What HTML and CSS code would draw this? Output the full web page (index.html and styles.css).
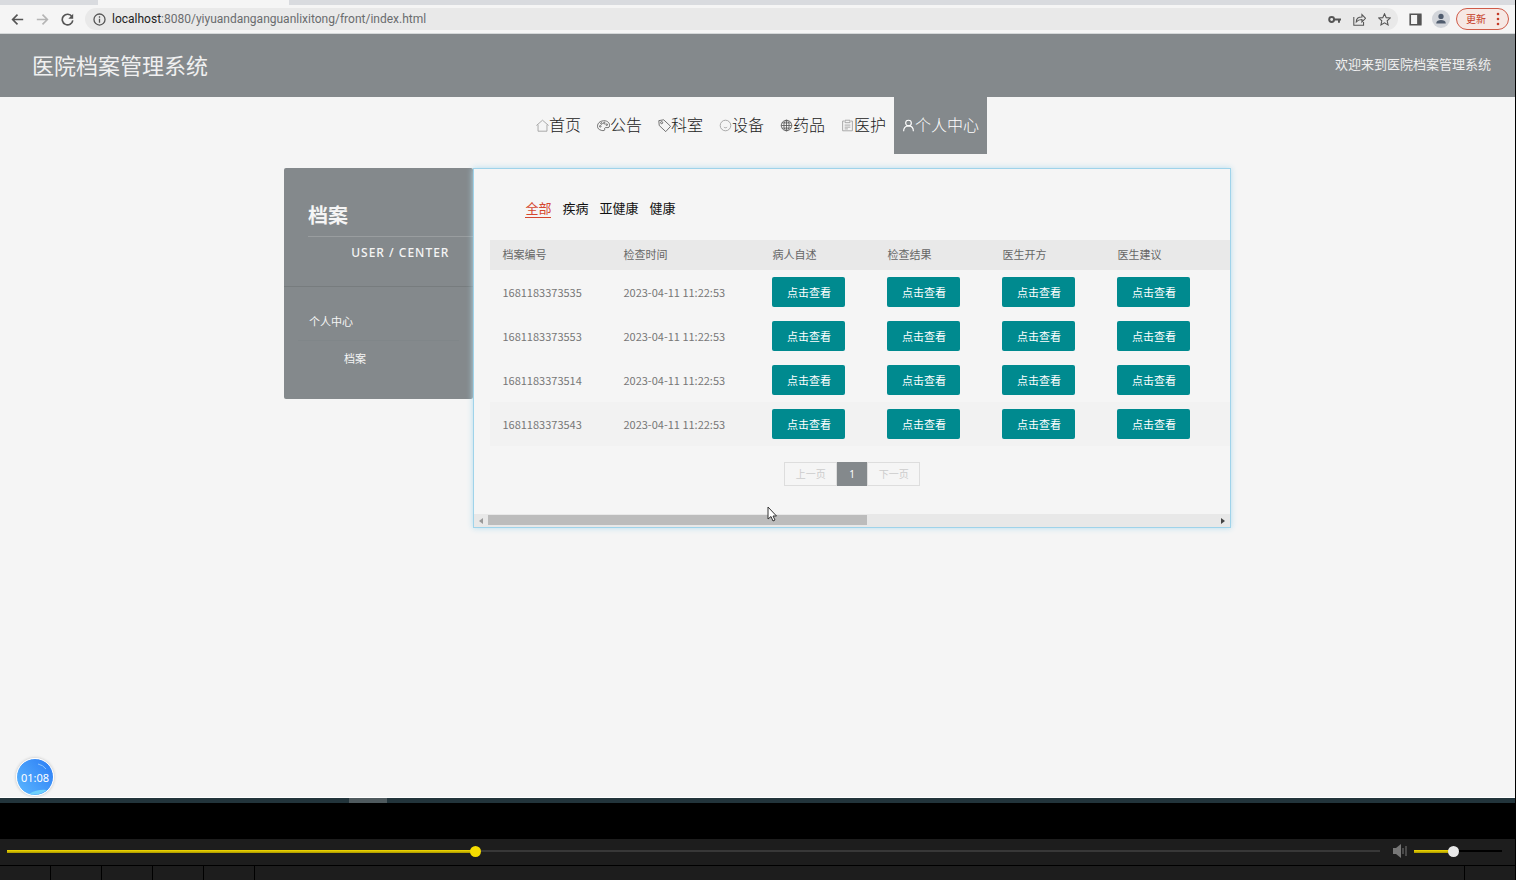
FILE: index.html
```html
<!DOCTYPE html>
<html lang="zh-CN">
<head>
    <meta charset="utf-8">
    <meta name="viewport" content="width=device-width, initial-scale=1">
    <title>医院档案管理系统</title>
    <link rel="stylesheet" href="styles.css">
</head>
<body>
    <!-- 浏览器 -->
    <div class="tab-strip"><div class="tab-active"></div></div>
    <div class="toolbar">
        <button class="tool" aria-label="后退"><svg viewBox="0 0 16 16"><path d="M15 8H2M8 2L2 8l6 6"/></svg></button>
        <button class="tool tool-off" aria-label="前进"><svg viewBox="0 0 16 16"><path d="M1 8h13M8 2l6 6-6 6"/></svg></button>
        <button class="tool" aria-label="刷新"><svg viewBox="0 0 16 16"><path d="M13.5 4.5A6.5 6.5 0 1 0 14.5 9"/><path d="M15 1v6H9z" class="solid"/></svg></button>
        <div class="address">
            <svg class="info" viewBox="0 0 16 16"><circle cx="8" cy="8" r="6.8"/><path d="M8 7v5M8 4v1.8"/></svg>
            <div class="url"><b>localhost</b>:8080/yiyuandanganguanlixitong/front/index.html</div>
            <button class="tool" aria-label="密码"><svg viewBox="0 0 16 16"><circle cx="4.5" cy="8" r="3" class="thick"/><path d="M8 8h8M13.5 8v4" class="thick"/></svg></button>
            <button class="tool" aria-label="分享"><svg viewBox="0 0 16 16" class="thin"><path d="M1 5v10h12v-4M4 11c0-4 3-6 7-6V2l4.500 4.500L11 11V8c-3 0-5 .5-7 3z"/></svg></button>
            <button class="tool" aria-label="收藏"><svg viewBox="0 0 16 16" class="thin"><path d="M8 1l2.100 4.700 5 .5-3.800 3.400 1.100 5L8 12l-4.400 2.600 1.100-5L.9 6.200l5-.5z"/></svg></button>
        </div>
        <button class="tool" aria-label="侧边栏"><svg viewBox="0 0 16 16"><path d="M1.500 1.500h13v13h-13z"/><path d="M10 2h5v12h-5z" class="solid"/></svg></button>
        <button class="avatar" aria-label="用户"><svg viewBox="0 0 16 16"><circle cx="8" cy="5" r="3"/><path d="M2.500 13c0-5 11-5 11 0z"/></svg></button>
        <button class="update">更新<svg viewBox="0 0 4 14"><circle cx="2" cy="2" r="1.300"/><circle cx="2" cy="7" r="1.300"/><circle cx="2" cy="12" r="1.300"/></svg></button>
    </div>

    <header class="header">
        <h1>医院档案管理系统</h1>
        <div>欢迎来到医院档案管理系统</div>
    </header>

    <nav class="nav">
        <a href="#"><svg viewBox="0 0 16 16" class="light"><path d="M.5 8L8 1.500 15.500 8M2.500 7v8h11V7"/></svg>首页</a>
        <a href="#"><svg viewBox="0 0 16 16"><path d="M3 13C-1 11 0 4 6 2.500s10 2 9.500 6c-.5 3-3 2-4.500 2s-2 1-1.500 2.500-3 2-6.500 0z"/><circle cx="4" cy="9" r="1"/><circle cx="5.500" cy="5.500" r="1"/><circle cx="9" cy="5" r="1"/><circle cx="12" cy="7" r="1"/></svg>公告</a>
        <a href="#"><svg viewBox="0 0 16 16"><path d="M1 2l6-1 8.500 8-6 6.500L1.500 8z"/><circle cx="4.500" cy="4.500" r="1.300"/></svg>科室</a>
        <a href="#"><svg viewBox="0 0 16 16" class="light"><circle cx="8" cy="8" r="6.500"/><path d="M6 10c1 1 3 1 4 0"/></svg>设备</a>
        <a href="#"><svg viewBox="0 0 16 16"><circle cx="8" cy="8" r="6.500"/><ellipse cx="8" cy="8" rx="3.200" ry="6.500"/><path d="M8 1.500v13M1.500 8h13M2.500 4.800h11M2.500 11.200h11"/></svg>药品</a>
        <a href="#"><svg viewBox="0 0 16 16" class="light"><path d="M4 2.500H2v12h12v-12h-2M5 1.500h6v3H5zM4.500 7.500h7M4.500 10h7M4.500 12.200h4"/></svg>医护</a>
        <a href="#" class="active"><svg viewBox="0 0 16 16"><circle cx="8" cy="5" r="3.500"/><path d="M2 15c0-4 2-6.500 6-6.500s6 2.500 6 6.500"/></svg>个人中心</a>
    </nav>

    <main class="container">
        <aside class="sidebar">
            <div class="sidebar-title">
                <h2>档案</h2>
                <p>USER / CENTER</p>
            </div>
            <div class="sidebar-menu">
                <a href="#">个人中心</a>
                <a href="#" class="sub">档案</a>
            </div>
        </aside>

        <section class="panel">
            <div class="filters">
                <a href="#" class="active">全部</a>
                <a href="#">疾病</a>
                <a href="#">亚健康</a>
                <a href="#">健康</a>
            </div>
            <table class="records">
                <colgroup>
                    <col class="col-no"><col class="col-time"><col class="col-btn"><col class="col-btn"><col class="col-btn"><col>
                </colgroup>
                <thead>
                    <tr><th>档案编号</th><th>检查时间</th><th>病人自述</th><th>检查结果</th><th>医生开方</th><th>医生建议</th></tr>
                </thead>
                <tbody>
                    <tr>
                        <td>1681183373535</td><td>2023-04-11 11:22:53</td>
                        <td><button>点击查看</button></td><td><button>点击查看</button></td><td><button>点击查看</button></td><td><button>点击查看</button></td>
                    </tr>
                    <tr>
                        <td>1681183373553</td><td>2023-04-11 11:22:53</td>
                        <td><button>点击查看</button></td><td><button>点击查看</button></td><td><button>点击查看</button></td><td><button>点击查看</button></td>
                    </tr>
                    <tr>
                        <td>1681183373514</td><td>2023-04-11 11:22:53</td>
                        <td><button>点击查看</button></td><td><button>点击查看</button></td><td><button>点击查看</button></td><td><button>点击查看</button></td>
                    </tr>
                    <tr class="hover">
                        <td>1681183373543</td><td>2023-04-11 11:22:53</td>
                        <td><button>点击查看</button></td><td><button>点击查看</button></td><td><button>点击查看</button></td><td><button>点击查看</button></td>
                    </tr>
                </tbody>
            </table>
            <div class="pager">
                <button disabled>上一页</button>
                <button class="current">1</button>
                <button disabled>下一页</button>
            </div>
            <div class="scrollbar">
                <button class="arrow arrow-off" aria-label="向左滚动"><svg viewBox="0 0 4 6"><path d="M4 0v6L0 3z"/></svg></button>
                <div class="track"><div class="thumb"></div></div>
                <button class="arrow" aria-label="向右滚动"><svg viewBox="0 0 4 6"><path d="M0 0v6l4-3z"/></svg></button>
            </div>
            <svg class="cursor" viewBox="0 0 10 16"><path d="M1 1v12l3-2.500 2 4.500 2-1-2-4h3.500z"/></svg>
        </section>
    </main>

    <div class="timer">
        <svg viewBox="0 0 36 36"><path d="M12 35q8-5 18-4-8 6-18 4z" fill="#6fd0fb"/><path d="M21 5q5 1 8 5" fill="none" stroke="#8fc6ff"/></svg>
        <span>01:08</span>
    </div>

    <!-- 播放器 -->
    <div class="taskbar"><div class="taskbar-item"></div></div>
    <footer class="player">
        <div class="controls">
            <input type="range" class="progress" aria-label="进度" min="0" max="100" step="0.1" value="34" style="--value: 34%">
            <svg class="speaker" viewBox="0 0 16 14"><path d="M1 4h3l5-4v14l-5-4H1z"/><path d="M10.500 4h1v6h-1zM13.500 2h1v10h-1z"/></svg>
            <input type="range" class="volume" aria-label="音量" value="44" style="--value: 44%">
        </div>
        <div class="buttons">
            <div class="cell"></div><div class="cell"></div><div class="cell"></div><div class="cell"></div><div class="cell"></div>
            <div class="cell cell-last"></div>
        </div>
    </footer>
</body>
</html>
```
FILE: styles.css
```css
* {
    box-sizing: border-box;
}
html, body {
    height: 100%;
    margin: 0;
}
body {
    display: flex;
    flex-direction: column;
    position: relative;
    overflow: hidden;
    border-right: 1px solid #000;
    background: #f5f5f5;
    font-family: "Noto Sans", "Noto Sans CJK SC", sans-serif;
    font-size: 11px;
    color: #666;
}
a {
    color: inherit;
    text-decoration: none;
}
button {
    padding: 0;
    border: 0;
    background: none;
    font: inherit;
    color: inherit;
}
h1, h2, p {
    margin: 0;
}

/* 浏览器 */
.tab-strip {
    flex: none;
    height: 5px;
    padding-left: 98px;
    background: #d9dbdf;
}
.tab-active {
    width: 191px;
    height: 5px;
    background: #f5f5f5;
}
.toolbar {
    flex: none;
    display: flex;
    align-items: center;
    gap: 12px;
    height: 29px;
    padding: 0 6px 0 11px;
    border-bottom: 1px solid #d5d8d9;
}
.toolbar svg {
    display: block;
    fill: none;
    stroke: #555;
    stroke-width: 2;
}
.tool, .tool svg {
    width: 13px;
    height: 13px;
}
.toolbar .tool-off svg { stroke: #b5b5b5; }
.toolbar .thin { stroke-width: 1.3; }
.toolbar .thick { stroke-width: 2.4; }
.toolbar .solid { fill: #555; stroke: none; }
.address {
    flex: 1;
    display: flex;
    align-items: center;
    gap: 12px;
    height: 22px;
    padding: 0 7px 0 8px;
    margin: 0 -1px;
    border-radius: 11px;
    background: #e9e9e9;
}
.toolbar .info {
    width: 13px;
    height: 13px;
    margin-right: -6px;
    stroke-width: 1.6;
}
.url {
    flex: 1;
    font-family: Roboto, sans-serif;
    font-size: 12px;
    line-height: 16px;
    color: #6a6c6e;
}
.url b {
    font-weight: normal;
    color: #222;
}
.avatar {
    display: grid;
    place-items: center;
    width: 18px;
    height: 18px;
    margin: 0 -6px 0 -2px;
    border-radius: 50%;
    background: #d2d5da;
}
.avatar svg {
    width: 14px;
    height: 14px;
    fill: #505c6e;
    stroke: none;
}
.update {
    display: flex;
    align-items: center;
    justify-content: space-between;
    width: 53px;
    height: 22px;
    padding: 0 8px 0 9px;
    border: 1px solid #cf5b48;
    border-radius: 11px;
    background: #f6e8e4;
    font-size: 10px;
    line-height: 18px;
    color: #c53b27;
}
.update svg {
    width: 4px;
    height: 14px;
    fill: #c53b27;
    stroke: none;
}

/* 头部 */
.header {
    flex: none;
    display: flex;
    align-items: center;
    justify-content: space-between;
    height: 63px;
    padding: 0 24px 4px 32px;
    background: #84898c;
    font-size: 13px;
    color: #f0f0f0;
}
.header h1 {
    font-size: 22px;
    font-weight: normal;
}
.nav {
    flex: none;
    display: flex;
    justify-content: center;
    height: 57px;
    margin-bottom: 14px;
    font-size: 16px;
    font-weight: 300;
    color: #222;
}
.nav a {
    display: flex;
    align-items: center;
    padding: 0 8px 4px;
}
.nav svg {
    width: 13px;
    height: 13px;
    margin-top: 3px;
    fill: none;
    stroke: #555;
}
.nav .light { stroke: #999; }
.nav .active {
    background: #84898c;
    color: #fff;
}
.nav .active svg {
    stroke: #fff;
    stroke-width: 1.4;
}

/* 内容 */
.container {
    display: flex;
    align-items: flex-start;
    width: 62.5%;
    margin: 0 auto;
}
.sidebar {
    width: 20%;
    border-radius: 2px;
    overflow: hidden;
    background: #84898c;
    color: #f5f5f5;
}
.sidebar-title {
    height: 119px;
    padding: 32px 0 0 24px;
    border-bottom: 1px solid #777c7e;
}
.sidebar-title h2 {
    padding-bottom: 4px;
    border-bottom: 1px solid #999d9f;
    font-size: 20px;
    line-height: 32px;
}
.sidebar-title p {
    padding-right: 24px;
    font-size: 12px;
    font-weight: 500;
    line-height: 31px;
    letter-spacing: 1px;
    text-align: right;
}
.sidebar-menu {
    height: 112px;
    padding: 17px 14px;
}
.sidebar-menu a {
    display: block;
    padding-left: 11px;
    line-height: 36px;
    border-bottom: 1px solid #808689;
}
.sidebar-menu .sub {
    padding-left: 46px;
    border: 0;
}
.panel {
    position: relative;
    flex: 1;
    min-width: 0;
    border: 1px solid #9fd3ea;
    box-shadow: 0 0 6px #b3dcee;
}
.filters {
    display: flex;
    gap: 11px;
    padding: 30px 51px 22px;
    font-size: 13px;
    line-height: 18px;
    color: #111;
}
.filters a { border-bottom: 1px solid transparent; }
.filters .active {
    border-color: #d5472f;
    color: #d5472f;
}
.records {
    width: calc(100% - 16px);
    margin-left: 16px;
    table-layout: fixed;
    border-collapse: collapse;
    font-family: "Noto Sans CJK SC", sans-serif;
}
.col-no { width: 121px; }
.col-time { width: 149px; }
.col-btn { width: 115px; }
.records th, .records td {
    padding: 0 12px;
    text-align: left;
    font-weight: normal;
    white-space: nowrap;
}
.records th {
    height: 30px;
    padding-bottom: 2px;
    background: #e9e9e9;
}
.records td {
    height: 44px;
    color: #777;
}
.records .hover { background: #f2f2f2; }
.records button {
    display: block;
    width: 73px;
    height: 30px;
    border-radius: 2px;
    background: #008a8f;
    line-height: 28px;
    color: #fff;
}
.pager {
    display: flex;
    justify-content: center;
    padding: 16px 0 28px;
    font-size: 10px;
}
.pager button {
    width: 53px;
    height: 24px;
    padding-bottom: 2px;
    border: 1px solid #ddd;
    color: #ccc;
}
.pager .current {
    width: 30px;
    padding: 0;
    border: 0;
    background: #84898c;
    color: #fff;
}
.scrollbar {
    display: flex;
    height: 13px;
    background: #e8e8e8;
}
.arrow {
    display: grid;
    place-items: center;
    width: 14px;
    height: 13px;
}
.arrow svg {
    width: 4px;
    height: 6px;
    fill: #444;
}
.arrow-off svg { fill: #999; }
.track {
    flex: 1;
    padding: 1px 0;
}
.thumb {
    width: 52%;
    height: 10px;
    background: #bcbcbc;
}
.cursor {
    position: absolute;
    left: 293px;
    bottom: 5px;
    width: 10px;
    height: 16px;
    fill: #fff;
    stroke: #333;
}
.timer {
    position: absolute;
    left: 16px;
    bottom: 84px;
    display: grid;
    place-items: center;
    width: 38px;
    height: 38px;
    border: 1px solid #fff;
    border-radius: 50%;
    background: linear-gradient(50deg, #5cb8ff, #2b7cf5);
    box-shadow: 0 0 3px #bbb;
    color: #fff;
}
.timer svg, .timer span {
    grid-area: 1 / 1;
}
.timer svg {
    width: 36px;
    height: 36px;
}

/* 播放器 */
.taskbar {
    flex: none;
    height: 42px;
    margin-top: auto;
    padding-left: 349px;
    border-top: 1px solid #fff;
    background: linear-gradient(#22343b 5px, #000 5px);
}
.taskbar-item {
    width: 38px;
    height: 5px;
    background: #4f5a5e;
}
.player {
    flex: none;
    background: #1d1d1d;
}
.controls {
    display: flex;
    align-items: center;
    height: 27px;
    padding: 0 13px 2px 7px;
    border-bottom: 1px solid #000;
}
.controls input {
    appearance: none;
    height: 12px;
    margin: 0;
    background: linear-gradient(#f5dc00, #a89600) left / var(--value) 3px no-repeat,
        linear-gradient(var(--rest), var(--rest)) center / 100% 2px no-repeat;
}
.controls input::-webkit-slider-thumb {
    appearance: none;
    width: 11px;
    height: 11px;
    border-radius: 50%;
    background: var(--thumb);
}
.progress {
    --rest: #383838;
    --thumb: #f5dc00;
    flex: 1;
    min-width: 0;
}
.speaker {
    width: 16px;
    height: 14px;
    margin: 0 6px 0 12px;
    fill: #777;
}
.volume {
    --rest: #000;
    --thumb: #e8e8e8;
    width: 88px;
}
.buttons {
    display: flex;
    height: 14px;
}
.cell {
    width: 51px;
    border-right: 1px solid #000;
}
.cell-last {
    margin-left: auto;
    border-right: 0;
    border-left: 1px solid #000;
}
```
